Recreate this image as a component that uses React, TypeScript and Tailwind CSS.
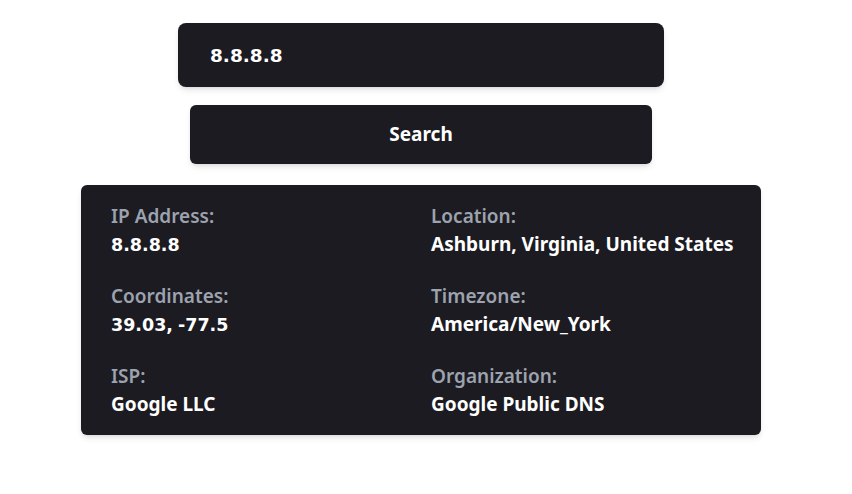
import React, { useState } from 'react';

const rows = [
  { label: 'IP Address:', value: '8.8.8.8' },
  { label: 'Location:', value: 'Ashburn, Virginia, United States' },
  { label: 'Coordinates:', value: '39.03, -77.5' },
  { label: 'Timezone:', value: 'America/New_York' },
  { label: 'ISP:', value: 'Google LLC' },
  { label: 'Organization:', value: 'Google Public DNS' },
];

// digits in the reference are wide, DejaVu-like; letters are narrower
function Value({ text }: { text: string }) {
  const parts = text.split(/([\d.,\-]+)/);
  return (
    <>
      {parts.map((p, i) =>
        /\d/.test(p) ? (
          <span key={i} className="font-['DejaVu_Sans',sans-serif] text-[17.5px]">
            {p}
          </span>
        ) : (
          <React.Fragment key={i}>{p}</React.Fragment>
        )
      )}
    </>
  );
}

export default function App() {
  const [ip, setIp] = useState('8.8.8.8');

  return (
    <div
      className="min-h-screen bg-white flex flex-col items-center pt-[23px] pr-[10px]"
      style={{ fontFamily: '"Noto Sans", "DejaVu Sans", sans-serif' }}
    >
      <input
        autoFocus
        value={ip}
        onChange={e => setIp(e.target.value)}
        className="w-[486px] h-[64px] rounded-lg bg-[#1c1b21] text-white text-[18.5px] font-bold px-8 shadow-md outline-none caret-gray-400 font-['DejaVu_Sans',sans-serif]"
      />
      <button className="mt-[18px] w-[462px] h-[59px] rounded-md bg-[#1c1b21] text-white text-[19px] font-bold shadow-md">
        Search
      </button>

      <div className="mt-[21px] w-[680px] rounded-md bg-[#1c1b21] shadow-md px-[30px] pt-[17px] pb-[17px] grid grid-cols-2 gap-x-5 gap-y-[23px]">
        {rows.map(r => (
          <div key={r.label} className="flex flex-col whitespace-nowrap">
            <span className="text-[19px] font-semibold text-[#9ca3af] leading-7">{r.label}</span>
            <span className="text-[19px] font-bold text-white leading-7">
              <Value text={r.value} />
            </span>
          </div>
        ))}
      </div>
    </div>
  );
}
